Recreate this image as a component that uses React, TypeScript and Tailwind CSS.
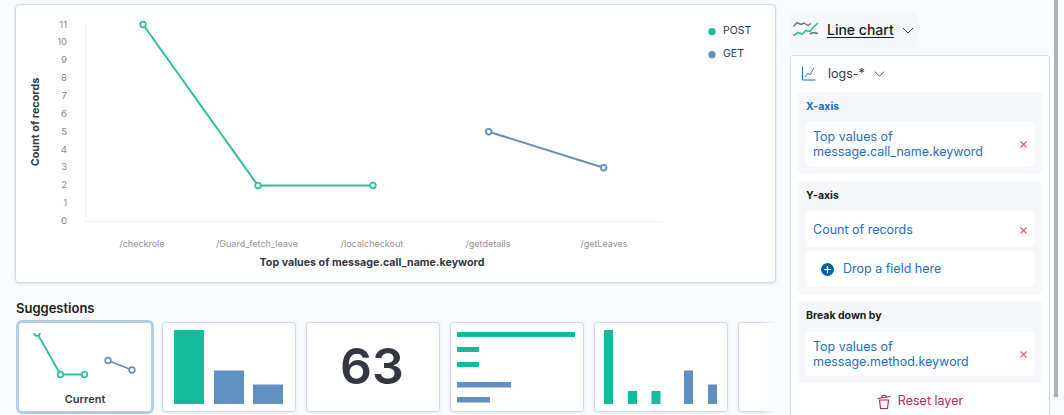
const teal = '#16bb99'
const blue = '#5f90bf'

const yTicks = [11, 10, 9, 8, 7, 6, 5, 4, 3, 2, 1, 0]
const xLabels = [
  { x: 142, label: '/checkrole' },
  { x: 257, label: '/Guard_fetch_leave' },
  { x: 372, label: '/localcheckout' },
  { x: 488, label: '/getdetails' },
  { x: 604, label: '/getLeaves' },
]

function MainChart() {
  return (
    <svg width="759" height="277" viewBox="16 5 759 277" className="block" style={{ fontFamily: 'Inter, sans-serif' }}>
      <line x1="85.5" y1="24" x2="85.5" y2="221" stroke="#f1f3f6" />
      <line x1="85" y1="221.5" x2="662" y2="221.5" stroke="#eef0f4" />
      {yTicks.map((t, i) => (
        <text key={t} x="67" y={27.5 + i * 17.87} textAnchor="end" fontSize="9.5" fill="#83868f">
          {t}
        </text>
      ))}
      {xLabels.map((l) => (
        <text key={l.label} x={l.x} y="247" textAnchor="middle" fontSize="9" fill="#8d9098">
          {l.label}
        </text>
      ))}
      <text x="372" y="266" textAnchor="middle" fontSize="10.7" fontWeight="700" fill="#343741">
        Top values of message.call_name.keyword
      </text>
      <text transform="translate(38.5 122) rotate(-90)" textAnchor="middle" fontSize="10.8" fontWeight="700" fill="#343741">
        Count of records
      </text>
      <polyline points="143,24.5 258,185.5 373,185.5" fill="none" stroke="#2dbf9f" strokeWidth="2" />
      <polyline points="488.7,131.7 603.7,167.7" fill="none" stroke={blue} strokeWidth="2" />
      {[[143, 24.5], [258, 185.5], [373, 185.5]].map(([x, y]) => (
        <circle key={x} cx={x} cy={y} r="2.8" fill="#fff" stroke="#2dbf9f" strokeWidth="1.8" />
      ))}
      {[[488.7, 131.7], [603.7, 167.7]].map(([x, y]) => (
        <circle key={x} cx={x} cy={y} r="2.8" fill="#fff" stroke={blue} strokeWidth="1.8" />
      ))}
      <circle cx="712" cy="31.7" r="3.6" fill={teal} />
      <circle cx="712" cy="54.7" r="3.6" fill={blue} />
      <text x="723" y="34" fontSize="10.5" fill="#343741">POST</text>
      <text x="723" y="57" fontSize="10.5" fill="#343741">GET</text>
    </svg>
  )
}

function SuggestionCard({ className, children }: { className: string; children: React.ReactNode }) {
  return (
    <div className={`h-[90px] w-[134px] shrink-0 rounded-[4px] border bg-white ${className}`}>
      {children}
    </div>
  )
}

const plainCard = 'border-[#d3dae6] shadow-[0_1px_3px_rgba(152,162,179,0.25)]'

function Bars({ bars }: { bars: number[][] }) {
  return (
    <svg width="132" height="88" className="block">
      {bars.map(([x, y, bw, bh, c], i) => (
        <rect key={i} x={x} y={y} width={bw} height={bh} fill={c === 0 ? teal : blue} />
      ))}
    </svg>
  )
}

function Suggestions() {
  return (
    <div className="relative mt-[17px] w-[761px]">
      <h2 className="ml-[1px] text-[13px] font-semibold leading-[16px] text-[#1a1c21]">Suggestions</h2>
      <div className="relative -ml-[1px] mt-[3px] flex h-[96px] items-start gap-[10px] overflow-hidden pl-[4px] pt-[3px]">
        <SuggestionCard className="flex flex-col items-center border-[#b1cde6] shadow-[0_0_0_2px_#b1cde6]">
          <svg width="132" height="60" viewBox="19 334 132 60" className="mt-[10px] block shrink-0">
            <polyline points="37,334 60.5,375.5 84.5,375.5" fill="none" stroke="#2dbf9f" strokeWidth="1.8" />
            <polyline points="108,361.5 132,371" fill="none" stroke={blue} strokeWidth="1.8" />
            {[[37, 334], [60.5, 375.5], [84.5, 375.5]].map(([x, y]) => (
              <circle key={x} cx={x} cy={y} r="2.8" fill="#fff" stroke="#2dbf9f" strokeWidth="1.7" />
            ))}
            {[[108, 361.5], [132, 371]].map(([x, y]) => (
              <circle key={x} cx={x} cy={y} r="2.8" fill="#fff" stroke={blue} strokeWidth="1.7" />
            ))}
          </svg>
          <span className="mt-[-1px] text-[11px] font-semibold leading-[14px] text-[#343741]">Current</span>
        </SuggestionCard>
        <SuggestionCard className={plainCard}>
          <Bars bars={[[11, 7, 30, 74, 0], [51, 47.5, 30, 33.5, 1], [90, 61.5, 30, 19.5, 1]]} />
        </SuggestionCard>
        <SuggestionCard className={`flex items-center justify-center ${plainCard}`}>
          <span className="-ml-[2px] -mt-[2px] text-[50px] font-semibold leading-none text-[#343741]">63</span>
        </SuggestionCard>
        <SuggestionCard className={plainCard}>
          <Bars bars={[[6, 9, 118, 5, 0], [6, 24, 22, 5, 0], [6, 39, 22, 5, 0], [6, 59, 54, 5.5, 1], [6, 74, 33, 5.5, 1]]} />
        </SuggestionCard>
        <SuggestionCard className={plainCard}>
          <Bars bars={[[9, 7, 9, 74, 0], [33, 68, 9, 13, 0], [56.5, 68, 9, 13, 0], [89, 47.5, 9, 33.5, 1], [113, 61.5, 9, 19.5, 1]]} />
        </SuggestionCard>
        <SuggestionCard className={plainCard}>{null}</SuggestionCard>
        <div className="absolute right-0 top-0 h-full w-[14px] bg-gradient-to-r from-transparent to-[#fafbfd]" />
      </div>
    </div>
  )
}

function Remove() {
  return (
    <svg width="7" height="7" viewBox="0 0 7 7" className="shrink-0">
      <path d="M.5.5l6 6M6.5.5l-6 6" stroke="#dc5c72" strokeWidth="1.1" fill="none" />
    </svg>
  )
}

function Field({ lines }: { lines: string[] }) {
  return (
    <div className="flex items-center justify-between rounded-[3px] bg-white py-[7px] pl-[7px] pr-[8px] text-[12.5px] leading-[15px] text-[#1e70bf]">
      <div>
        {lines.map((l) => (
          <div key={l}>{l}</div>
        ))}
      </div>
      <Remove />
    </div>
  )
}

function Group({ title, titleClass, children }: { title: string; titleClass: string; children: React.ReactNode }) {
  return (
    <div className="rounded-[3px] bg-[#f5f7fa] pb-[7px] pl-[8px] pr-[7px] pt-[8px]">
      <div className={`text-[10.5px] font-bold leading-[13px] ${titleClass}`}>{title}</div>
      {children}
    </div>
  )
}

function ConfigPanel() {
  return (
    <div className="w-[264px] shrink-0">
      <div className="mt-[12px] flex h-[36px] w-[127px] items-center rounded-[3px] bg-[#f5f7fa] pl-[3px]">
        <svg width="26" height="18" viewBox="0 0 26 18" fill="none" className="shrink-0">
          <path d="M.5 5.5 L4 1.5 L8 3.5 L11 2 L15 4.5 L18 2.5" stroke="#69707d" strokeWidth="1.4" />
          <path d="M.5 14.5 L5 11.5 L9 13 L13 9.5 L17 10.5 L20 6.5 L25 2" stroke="#2dbf9f" strokeWidth="1.6" />
          <path d="M17 13 L20 11.5 L25 12.5" stroke="#69707d" strokeWidth="1.4" />
        </svg>
        <span className="ml-[8px] text-[14px] font-medium leading-[16px] text-[#1a1c21] underline underline-offset-2">
          Line chart
        </span>
        <svg width="12" height="12" viewBox="0 0 12 12" fill="none" className="ml-[8px]">
          <path d="M1 4l5 5 5-5" stroke="#343741" strokeWidth="1" />
        </svg>
      </div>
      <div className="mt-[7px] h-[400px] w-[260px] rounded-[3px] border border-[#d3dae6] bg-white px-[7px]">
        <div className="flex h-[36px] items-center pb-[1px] pl-[4px]">
          <svg width="14" height="15" viewBox="0 0 14 15" fill="none">
            <path d="M.5 .5v13.5H13.5" stroke="#1a6cb5" strokeWidth="1" />
            <path d="M3 11l3-4 2 2 4-7.5" stroke="#1a6cb5" strokeWidth="0.9" />
          </svg>
          <span className="ml-[12px] text-[12.5px] leading-[16px] text-[#343741]">logs-*</span>
          <svg width="11" height="11" viewBox="0 0 12 12" fill="none" className="ml-[9px]">
            <path d="M1 4l5 5 5-5" stroke="#343741" strokeWidth="1" />
          </svg>
        </div>
        <div className="flex flex-col">
          <Group title="X-axis" titleClass="mb-[9px] text-[#1a6cb5]">
            <Field lines={['Top values of', 'message.call_name.keyword']} />
          </Group>
          <div className="mt-[8px]">
            <Group title="Y-axis" titleClass="mb-[9px] text-[#1a1c21]">
              <div className="flex flex-col gap-[4px]">
                <div className="flex h-[36px] items-center justify-between rounded-[3px] bg-white pl-[7px] pr-[8px] pt-[2px] text-[12.5px] text-[#1e70bf]">
                  Count of records
                  <Remove />
                </div>
                <div className="flex h-[36px] items-center rounded-[3px] bg-white pl-[15px] text-[12.5px] text-[#1e70bf]">
                  <svg width="13" height="13" viewBox="0 0 13 13" className="mr-[9px]">
                    <circle cx="6.5" cy="6.5" r="6.5" fill="#0061a6" />
                    <path d="M6.5 3v7M3 6.5h7" stroke="#fff" strokeWidth="1.2" />
                  </svg>
                  Drop a field here
                </div>
              </div>
            </Group>
          </div>
          <div className="mt-[7px]">
            <Group title="Break down by" titleClass="mb-[10px] text-[#1a1c21]">
              <Field lines={['Top values of', 'message.method.keyword']} />
            </Group>
          </div>
        </div>
        <div className="mt-[10px] flex items-center justify-center text-[12.5px] leading-[16px] text-[#c9244f]">
          <svg width="14" height="15" viewBox="0 0 14 15" fill="none" className="mr-[7px]" stroke="#c9244f" strokeWidth="1.2">
            <path d="M.5 4.5l13-2M4.5 3.5l1-2h3l1 1" />
            <path d="M2.5 6h9l-1 8.5h-7z" />
          </svg>
          Reset layer
        </div>
      </div>
    </div>
  )
}

export default function App() {
  return (
    <div
      className="flex h-[415px] w-[1064px] overflow-hidden bg-[#fafbfd]"
      style={{ fontFamily: 'Inter, sans-serif' }}
    >
      <div className="w-[790px] shrink-0 pl-[15px] pt-[4px]">
        <div className="h-[279px] w-[761px] overflow-hidden rounded-[4px] border border-[#d3dae6] bg-white shadow-[0_1px_3px_rgba(152,162,179,0.3)]">
          <MainChart />
        </div>
        <Suggestions />
      </div>
      <ConfigPanel />
      <div className="h-[397px] w-[4px] shrink-0 bg-[#aeb0b9]" />
    </div>
  )
}
